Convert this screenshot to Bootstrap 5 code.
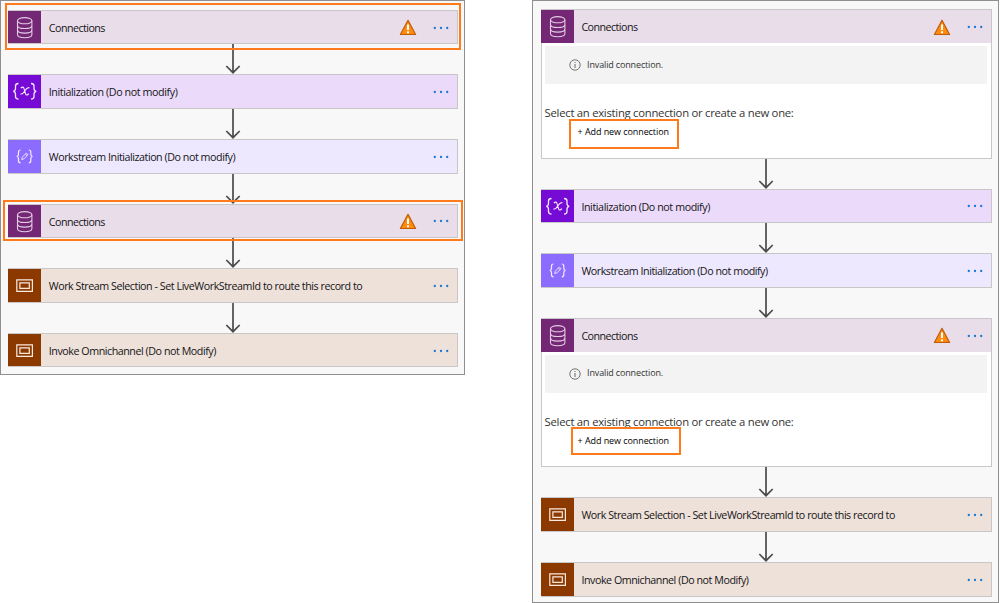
<!DOCTYPE html>
<html lang="en">
<head>
<meta charset="utf-8">
<meta name="viewport" content="width=device-width, initial-scale=1">
<title>Flow connections</title>
<link href="https://cdn.jsdelivr.net/npm/bootstrap@5.3.0/dist/css/bootstrap.min.css" rel="stylesheet">
<style>
body { font-family: "Open Sans", "Noto Sans", sans-serif; font-size: 10.7px; color: #151515; background: #fff; width: 999px; height: 603px; overflow: hidden; }
.flow { background: #f8f8f8; border: 1px solid #8f8f8f; width: 465px; padding: 8.8px 6px 6.6px 7px; }
.flow-open { width: 467px; padding: 8px 6px 5px 7.6px; }
.step { border: 1px solid #c9c6c8; border-left: 0; height: 34.6px; }
.step-open { height: 149.6px; background: #fff; border-left: 1px solid #c9c9c9; }
.step-open .head { height: 33px; margin-left: -1px; }
.tile { width: 33.4px; }
.tile svg, .link-down, .warn, .dots { display: block; flex: none; }
.title { padding: 1.6px 0 0 7.4px; white-space: nowrap; line-height: 16px; letter-spacing: -.45px; }
.t-conn { letter-spacing: -.53px; }
.t-init { letter-spacing: -.4px; }
.conn { background: #eaddea; } .conn-t { background: #742774; }
.vars { background: #ecdafb; } .vars-t { background: #770bd6; }
.data { background: #eee8ff; } .data-t { background: #8c6cff; }
.act { background: #eee1da; } .act-t { background: #8c3900; }
.warn { margin: 1px 15px 0 0; }
.dots { margin: 1px 7px 0 0; }
.link-down { margin-left: 217px; }
.flow-open .link-down { margin-left: 217.4px; }
.mark-box { border: 2px solid #ff7a1a; pointer-events: none; }
.m1 { left: -3px; top: -8px; width: 456px; height: 47px; }
.m2 { left: -5px; top: -5px; width: 460px; height: 41.5px; }
.notice { background: #f3f3f3; height: 38px; margin: 3.4px 4px 0 3px; padding-left: 24px; font-size: 9px; color: #333; letter-spacing: -.15px; }
.inv-text { padding: 0 0 2px 6.5px; }
.ask { font-size: 11.3px; line-height: 16px; color: #333; padding-left: 3px; margin-top: 20.4px; white-space: nowrap; letter-spacing: -.27px; }
.add { font-size: 9px; line-height: 14px; letter-spacing: -.08px; margin: 4px 0 0 36px; width: max-content; color: #000; white-space: nowrap; }
.m3 { left: -9px; top: -6px; width: 110px; height: 30px; }
.m4 { left: -7px; top: -7px; width: 110px; height: 28px; }
</style>
</head>
<body>
<svg width="0" height="0" class="position-absolute">
  <symbol id="db" viewBox="0 0 33 33"><g fill="none" stroke="#e3cbe3" stroke-width="1.1"><ellipse cx="16.7" cy="9.7" rx="7.2" ry="3.1"/><path d="M9.5 9.7V23.500c0 4.300 14.400 4.300 14.400 0V9.700M9.500 14.400c0 4.100 14.400 4.100 14.400 0M9.500 19c0 4.100 14.400 4.100 14.400 0"/></g></symbol>
  <symbol id="var" viewBox="0 0 33 33"><g fill="none" stroke="#f6ebff" stroke-width="1.300"><path d="M10.500 8.500c-2.500 0-3 .8-3 2.500v2.500c0 1.800-.6 2.500-2.200 2.800 1.600.3 2.200 1 2.200 2.800v2.500c0 1.700.5 2.500 3 2.500M23 8.500c2.500 0 3 .8 3 2.500v2.500c0 1.800.6 2.500 2.200 2.800-1.600.3-2.200 1-2.200 2.800v2.500c0 1.700-.5 2.500-3 2.500"/><path stroke-width="1.100" d="M12.800 13.200c1.500-1.600 2.700-1.400 3.300.6l1.500 5c.5 1.700 1.900 1.600 3.200-.2M21.400 12.700c-2.200-.6-3.600 1.500-4.700 3.300-1.100 1.900-2.200 3.600-4.300 2.900"/></g></symbol>
  <symbol id="pen" viewBox="0 0 33 33"><g fill="none" stroke="#f2edff" stroke-width="1.200"><path d="M12.500 10c-1.600 0-2 .7-2 2v2.200c0 1.300-.5 1.900-1.600 2.100 1.100.3 1.600.9 1.600 2.200v2.300c0 1.400.4 2 2 2M20.800 10c1.600 0 2 .7 2 2v2.200c0 1.300.5 1.900 1.600 2.100-1.100.3-1.600.9-1.600 2.200v2.300c0 1.400-.4 2-2 2"/><path stroke-width=".9" d="M13.700 19.500l.6-2.300 4-4.100 1.700 1.600-4.100 4.200zM17.300 14.100l1.700 1.600"/></g></symbol>
  <symbol id="frame" viewBox="0 0 33 33"><g fill="none" stroke="#fae9df" stroke-width="1.200"><path d="M8.800 10.800h15.600v11.500H8.800z"/><path d="M11.900 13.800h9.400v5.500h-9.400z"/></g></symbol>
  <symbol id="arrow" viewBox="0 0 16 30"><path d="M8 0V28.500M1.300 22 8 28.700 14.700 22" fill="none" stroke="#4b4b4b" stroke-width="1.700"/></symbol>
  <symbol id="alert" viewBox="0 0 18 17"><path d="M9 1.300 16.600 15.500H1.400z" fill="#ff8a0c" stroke="#bd5d0b" stroke-width="1.200" stroke-linejoin="round"/><path d="M9 5.500V11M9 12.300v2" stroke="#fff" stroke-width="2"/></symbol>
  <symbol id="more" viewBox="0 0 18 4"><g fill="#1478d4"><circle cx="2.800" cy="2" r="1.150"/><circle cx="9" cy="2" r="1.150"/><circle cx="15.200" cy="2" r="1.150"/></g></symbol>
</svg>
<main class="d-flex align-items-start justify-content-between">
  <section class="flow">
    <div class="step conn d-flex align-items-stretch position-relative">
      <div class="tile conn-t"><svg width="33" height="33"><use href="#db"/></svg></div>
      <div class="title t-conn align-self-center me-auto">Connections</div>
      <svg class="warn align-self-center" width="18" height="17"><use href="#alert"/></svg>
      <svg class="dots align-self-center" width="18" height="4"><use href="#more"/></svg>
      <div class="mark-box m1 position-absolute"></div>
    </div>
    <svg class="link-down" width="16" height="30"><use href="#arrow"/></svg>
    <div class="step vars d-flex">
      <div class="tile vars-t"><svg width="33" height="33"><use href="#var"/></svg></div>
      <div class="title t-init align-self-center me-auto">Initialization (Do not modify)</div>
      <svg class="dots align-self-center" width="18" height="4"><use href="#more"/></svg>
    </div>
    <svg class="link-down" width="16" height="30"><use href="#arrow"/></svg>
    <div class="step data d-flex">
      <div class="tile data-t"><svg width="33" height="33"><use href="#pen"/></svg></div>
      <div class="title t-work align-self-center me-auto">Workstream Initialization (Do not modify)</div>
      <svg class="dots align-self-center" width="18" height="4"><use href="#more"/></svg>
    </div>
    <svg class="link-down" width="16" height="30"><use href="#arrow"/></svg>
    <div class="step conn d-flex position-relative">
      <div class="tile conn-t"><svg width="33" height="33"><use href="#db"/></svg></div>
      <div class="title t-conn align-self-center me-auto">Connections</div>
      <svg class="warn align-self-center" width="18" height="17"><use href="#alert"/></svg>
      <svg class="dots align-self-center" width="18" height="4"><use href="#more"/></svg>
      <div class="mark-box m2 position-absolute"></div>
    </div>
    <svg class="link-down" width="16" height="30"><use href="#arrow"/></svg>
    <div class="step act d-flex">
      <div class="tile act-t"><svg width="33" height="33"><use href="#frame"/></svg></div>
      <div class="title t-sel align-self-center me-auto">Work Stream Selection - Set LiveWorkStreamId to route this record to</div>
      <svg class="dots align-self-center" width="18" height="4"><use href="#more"/></svg>
    </div>
    <svg class="link-down" width="16" height="30"><use href="#arrow"/></svg>
    <div class="step act d-flex">
      <div class="tile act-t"><svg width="33" height="33"><use href="#frame"/></svg></div>
      <div class="title t-inv align-self-center me-auto">Invoke Omnichannel (Do not Modify)</div>
      <svg class="dots align-self-center" width="18" height="4"><use href="#more"/></svg>
    </div>
  </section>

  <section class="flow flow-open">
    <div class="step step-open">
      <div class="head conn d-flex">
        <div class="tile conn-t"><svg width="33" height="33"><use href="#db"/></svg></div>
        <div class="title t-conn align-self-center me-auto">Connections</div>
        <svg class="warn align-self-center" width="18" height="17"><use href="#alert"/></svg>
        <svg class="dots align-self-center" width="18" height="4"><use href="#more"/></svg>
      </div>
      <div class="notice d-flex align-items-center"><svg width="12" height="12" viewBox="0 0 12 12" fill="none" stroke="#666"><circle cx="6" cy="6" r="5.200" stroke-width=".9"/><path d="M6 5v4M6 3v1"/></svg><span class="inv-text">Invalid connection.</span></div>
      <div class="ask">Select an existing connection or create a new one:</div>
      <div class="add position-relative">+ Add new connection<div class="mark-box m3 position-absolute"></div></div>
    </div>
    <svg class="link-down" width="16" height="30"><use href="#arrow"/></svg>
    <div class="step vars d-flex">
      <div class="tile vars-t"><svg width="33" height="33"><use href="#var"/></svg></div>
      <div class="title t-init align-self-center me-auto">Initialization (Do not modify)</div>
      <svg class="dots align-self-center" width="18" height="4"><use href="#more"/></svg>
    </div>
    <svg class="link-down" width="16" height="30"><use href="#arrow"/></svg>
    <div class="step data d-flex">
      <div class="tile data-t"><svg width="33" height="33"><use href="#pen"/></svg></div>
      <div class="title t-work align-self-center me-auto">Workstream Initialization (Do not modify)</div>
      <svg class="dots align-self-center" width="18" height="4"><use href="#more"/></svg>
    </div>
    <svg class="link-down" width="16" height="30"><use href="#arrow"/></svg>
    <div class="step step-open">
      <div class="head conn d-flex">
        <div class="tile conn-t"><svg width="33" height="33"><use href="#db"/></svg></div>
        <div class="title t-conn align-self-center me-auto">Connections</div>
        <svg class="warn align-self-center" width="18" height="17"><use href="#alert"/></svg>
        <svg class="dots align-self-center" width="18" height="4"><use href="#more"/></svg>
      </div>
      <div class="notice d-flex align-items-center"><svg width="12" height="12" viewBox="0 0 12 12" fill="none" stroke="#666"><circle cx="6" cy="6" r="5.200" stroke-width=".9"/><path d="M6 5v4M6 3v1"/></svg><span class="inv-text">Invalid connection.</span></div>
      <div class="ask">Select an existing connection or create a new one:</div>
      <div class="add position-relative">+ Add new connection<div class="mark-box m4 position-absolute"></div></div>
    </div>
    <svg class="link-down" width="16" height="30"><use href="#arrow"/></svg>
    <div class="step act d-flex">
      <div class="tile act-t"><svg width="33" height="33"><use href="#frame"/></svg></div>
      <div class="title t-sel align-self-center me-auto">Work Stream Selection - Set LiveWorkStreamId to route this record to</div>
      <svg class="dots align-self-center" width="18" height="4"><use href="#more"/></svg>
    </div>
    <svg class="link-down" width="16" height="30"><use href="#arrow"/></svg>
    <div class="step act d-flex">
      <div class="tile act-t"><svg width="33" height="33"><use href="#frame"/></svg></div>
      <div class="title t-inv align-self-center me-auto">Invoke Omnichannel (Do not Modify)</div>
      <svg class="dots align-self-center" width="18" height="4"><use href="#more"/></svg>
    </div>
  </section>
</main>
<script src="https://cdn.jsdelivr.net/npm/bootstrap@5.3.0/dist/js/bootstrap.bundle.min.js"></script>
</body>
</html>
